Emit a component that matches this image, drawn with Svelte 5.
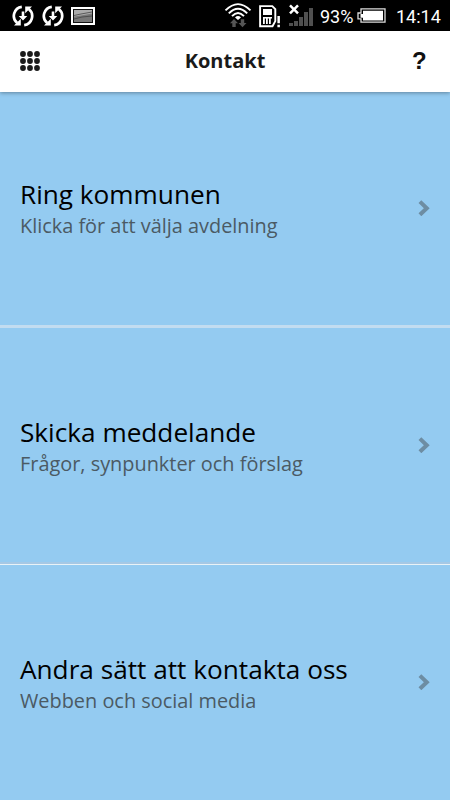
<script lang="ts">
  interface ContactItem {
    title: string;
    subtitle: string;
  }

  const items: ContactItem[] = [
    { title: 'Ring kommunen', subtitle: 'Klicka för att välja avdelning' },
    { title: 'Skicka meddelande', subtitle: 'Frågor, synpunkter och förslag' },
    { title: 'Andra sätt att kontakta oss', subtitle: 'Webben och social media' },
  ];

  const dots = [3, 10, 17];
</script>

{#snippet syncIcon()}
  <svg class="sync" width="22" height="24" viewBox="0 0 22 24" aria-hidden="true">
    <g fill="none" stroke="#fff" stroke-width="2.7">
      <path d="M9.8 2.8A9.2 9.2 0 0 0 5.2 19" />
      <path d="M12.2 21.2A9.2 9.2 0 0 0 16.8 5" />
    </g>
    <path fill="#fff" d="M2 21.5h6.8v-6.8zM20 2.5h-6.8v6.8zM9.7 7.5h2.6V12h3L11 16.6 6.7 12h3z" />
  </svg>
{/snippet}

<div class="screen">
  <div class="status-bar">
    <div class="notifications">
      {@render syncIcon()}
      {@render syncIcon()}
      <svg class="picture" width="24" height="18" viewBox="0 0 24 18" aria-hidden="true">
        <path fill="#fff" d="M0 0h24v18H0z" />
        <path fill="#111" d="M2 2h20v14H2z" />
        <path fill="#aaa" d="M3 3h18v12H3z" />
        <path fill="#777" d="M3 9.5l7-1 11-2V15H3z" />
        <path d="M3 8.5l7-1.5 11-2M3 12l8-2 10-1" fill="none" stroke="#444" stroke-width=".8" />
      </svg>
    </div>

    <div class="system">
      <svg class="wifi" width="28" height="26" viewBox="0 0 28 26" aria-hidden="true">
        <g fill="none" stroke="#fff" stroke-width="1.9">
          <path d="M1.5 8.4Q14-4.2 26.5 8.4" />
          <path d="M4.8 11.4Q14 2 23.2 11.4" />
          <path d="M8 14.2Q14 7.8 20 14.2" />
        </g>
        <path fill="#fff" d="M11 15.4Q14 12.8 17 15.4L14 18z" />
        <path fill="#555" d="M10 17l4 4.3h-2.3V25H8.3v-3.7H6zM18.5 25.3l-4-4.3h2.3v-3.7h3.4V21h2.3z" />
      </svg>
      <svg class="sim" width="23" height="24" viewBox="0 0 23 24" aria-hidden="true">
        <path d="M1.1 1.1h12.2l3 3v12l-2.8 5.2H1.1z" fill="none" stroke="#fff" stroke-width="1.9" />
        <path fill="#fff" d="M4 4h9v6H4zM4 12h9v1.5H4zM4 13h1.8v6H4zM7 13h1.8v6H7zM10 13h1.8v6H10z" />
        <path fill="#fff" d="M18.4 11h2.5v7.2h-2.5zM18.4 19.8h2.5v2.4h-2.5z" />
      </svg>
      <svg class="signal" width="25" height="23" viewBox="0 0 25 23" aria-hidden="true">
        <path fill="#505050" d="M0 19h4v3H0zM5 17h4v5H5zM10 13h4v9h-4zM15 8h4v14h-4zM20 4h4v18h-4z" />
        <path d="M1 1.3l8 8M9 1.3l-8 8" fill="none" stroke="#fff" stroke-width="2.5" />
      </svg>
      <span class="percent">93%</span>
      <svg class="battery" width="29" height="15" viewBox="0 0 29 15" aria-hidden="true">
        <path d="M4 .8h24v13.4H4v-3.4H1V5h3z" fill="none" stroke="#ddd" stroke-width="1.3" />
        <path fill="#fff" d="M6 2.7h20v9.8H6zM3.5 6H6v3.7H3.5z" />
      </svg>
      <span class="clock">14:14</span>
    </div>
  </div>

  <header class="app-bar">
    <button class="menu" aria-label="Meny">
      <svg width="20" height="20" viewBox="0 0 20 20" aria-hidden="true">
        {#each dots as y}
          {#each dots as x}
            <circle cx={x} cy={y} r="2.9" fill="#1a1a1a" />
          {/each}
        {/each}
      </svg>
    </button>
    <h1>Kontakt</h1>
    <button class="help" aria-label="Hjälp">?</button>
  </header>

  <main>
    {#each items as item}
      <button class="row">
        <span class="text">
          <span class="title">{item.title}</span>
          <span class="subtitle">{item.subtitle}</span>
        </span>
        <svg width="12" height="16" viewBox="0 0 12 16" aria-hidden="true">
          <path d="M1.9 1.6L8.8 8.2 1.9 14.8" fill="none" stroke="#6d8da3" stroke-width="4" />
        </svg>
      </button>
    {/each}
  </main>
</div>

<style>
  :global(body) {
    margin: 0;
    overflow: hidden;
  }

  .screen {
    display: flex;
    flex-direction: column;
    width: 450px;
    height: 800px;
    overflow: hidden;
    background: #94cbf1;
    font-family: 'Open Sans', 'Noto Sans', sans-serif;
  }

  button {
    border: 0;
    padding: 0;
    background: none;
    font: inherit;
    color: inherit;
    text-align: left;
  }

  svg {
    display: block;
    flex: none;
  }

  /* Android status bar */
  .status-bar {
    display: flex;
    justify-content: space-between;
    flex: none;
    height: 31px;
    background: #000;
    color: #fff;
    font-family: Roboto, sans-serif;
  }

  .notifications,
  .system {
    display: flex;
    align-items: flex-start;
  }

  .notifications {
    padding-left: 12px;
  }

  .sync {
    margin: 4px 8px 0 0;
  }

  .picture {
    margin: 7px 0 0 -1px;
  }

  .system {
    padding-right: 11px;
  }

  .wifi {
    margin-top: 2px;
  }

  .sim {
    margin: 5px 0 0 7px;
  }

  .signal {
    margin: 4px 0 0 7px;
  }

  .percent,
  .clock {
    line-height: 33px;
    white-space: nowrap;
  }

  .percent {
    width: 37px;
    font-size: 18px;
  }

  .signal + .percent {
    margin-left: 6px;
  }

  .battery {
    margin-top: 8px;
  }

  .clock {
    width: 43px;
    margin-left: 10px;
    font-size: 18px;
  }

  .app-bar {
    display: flex;
    align-items: center;
    justify-content: space-between;
    position: relative;
    flex: none;
    box-sizing: border-box;
    height: 61px;
    padding: 0 24px 2px 20px;
    background: #fff;
    box-shadow: 0 1px 4px rgba(0, 0, 0, 0.35);
  }

  h1 {
    margin: 0;
    padding: 1px 2px 0 0;
    font-size: 20px;
    font-weight: 700;
    line-height: 28px;
    color: #1a1a1a;
  }

  .help {
    width: 14px;
    font-family: 'Liberation Sans', sans-serif;
    font-size: 24px;
    font-weight: 700;
    line-height: 28px;
    color: #111;
  }

  main {
    display: flex;
    flex-direction: column;
    flex: 1;
  }

  .row {
    display: flex;
    align-items: center;
    justify-content: space-between;
    flex: none;
    box-sizing: border-box;
    width: 100%;
    height: 237px;
    padding: 0 20px 3px;
    border-bottom: 3px solid #c2dcf0;
  }

  .row:first-child {
    height: 236px;
    padding-bottom: 2px;
  }

  .row:nth-child(2) {
    border-bottom: 1px solid #e8f2f7;
    box-shadow: inset 0 -2px #a5c8e5;
    padding-bottom: 2px;
  }

  .row:last-child {
    border-bottom: 0;
  }

  .text {
    display: flex;
    flex-direction: column;
    padding-top: 3px;
  }

  .title {
    font-size: 26.2px;
    line-height: 33px;
    color: #000;
  }

  .subtitle {
    padding-top: 1px;
    font-size: 19.9px;
    line-height: 28px;
    color: #4b5a64;
  }
</style>
